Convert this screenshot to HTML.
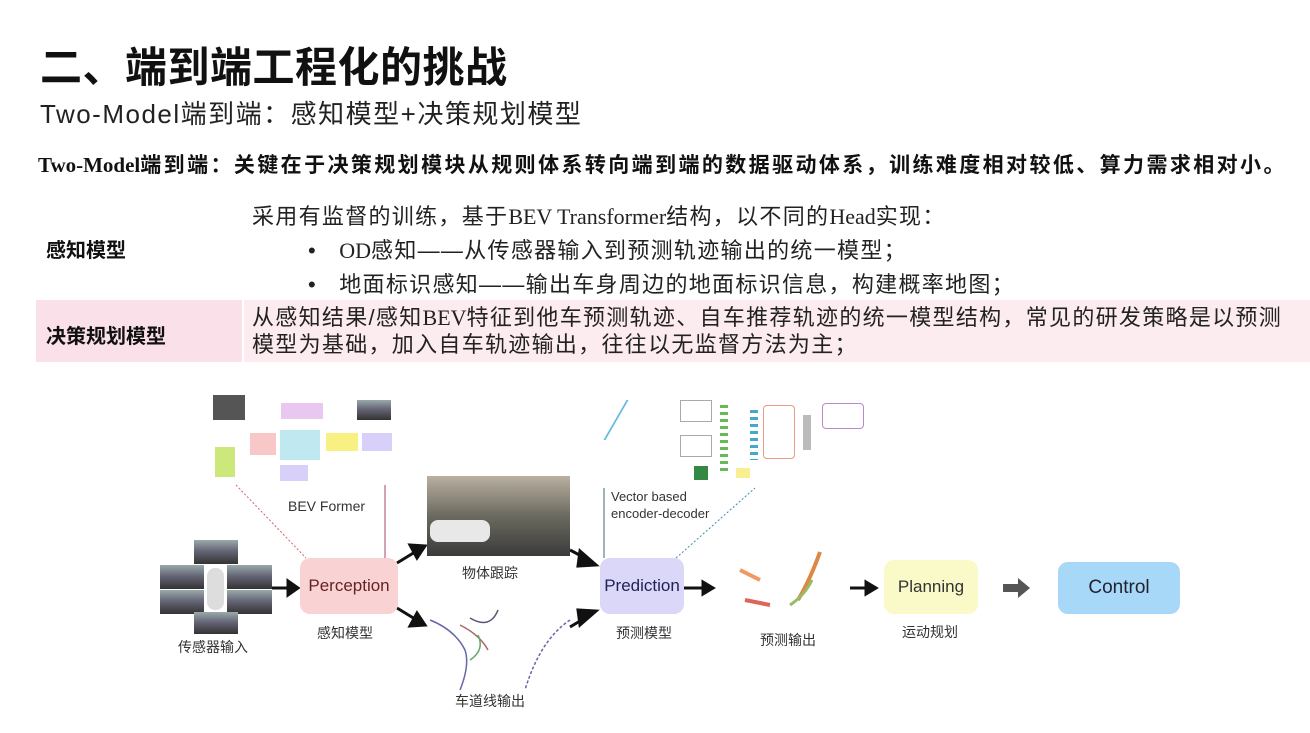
<!DOCTYPE html>
<html><head><meta charset="utf-8"><style>
body{margin:0;width:1310px;height:733px;background:#fff;position:relative;overflow:hidden;font-family:"Liberation Sans","Noto Sans CJK SC",sans-serif;color:#111}
.a{position:absolute;white-space:nowrap}
.box{position:absolute;border-radius:10px;display:flex;align-items:center;justify-content:center;font-size:17px;color:#222}
.lab{position:absolute;font-size:14px;color:#333;white-space:nowrap}
.img{position:absolute;background:linear-gradient(#9aa 0%,#667 45%,#333 100%)}
.s{font-family:'Liberation Serif',serif;letter-spacing:0}
.b{letter-spacing:1.3px}
</style></head><body>
<div class="a" style="left:40px;top:34px;font-size:42px;font-weight:bold;letter-spacing:0.5px">二、端到端工程化的挑战</div>
<div class="a" style="left:40px;top:94px;font-size:26px;color:#222;letter-spacing:1.5px">Two-Model端到端：感知模型+决策规划模型</div>
<div class="a" style="left:38px;top:149px;font-size:21px;font-weight:bold;letter-spacing:2.4px"><span style="font-family:'Liberation Serif','Noto Serif CJK SC',serif;letter-spacing:0">Two-Model</span>端到端：关键在于决策规划模块从规则体系转向端到端的数据驱动体系，训练难度相对较低、算力需求相对小。</div>
<div class="a b" style="left:252px;top:199px;font-size:22px;color:#222">采用有监督的训练，基于<span class="s">BEV Transformer</span>结构，以不同的<span class="s">Head</span>实现：</div>
<div class="a" style="left:46px;top:234px;font-size:20px;font-weight:bold">感知模型</div>
<div class="a b" style="left:308px;top:233px;font-size:22px;color:#222">•&nbsp;&nbsp;&nbsp;<span class="s">OD</span>感知——从传感器输入到预测轨迹输出的统一模型；</div>
<div class="a b" style="left:308px;top:267px;font-size:22px;color:#222">•&nbsp;&nbsp;&nbsp;地面标识感知——输出车身周边的地面标识信息，构建概率地图；</div>
<div style="position:absolute;left:36px;top:300px;width:206px;height:62px;background:#fae0e8"></div>
<div style="position:absolute;left:244px;top:300px;width:1066px;height:62px;background:#fcebef"></div>
<div class="a" style="left:46px;top:320px;font-size:20px;font-weight:bold">决策规划模型</div>
<div class="a b" style="left:252px;top:304px;font-size:22px;line-height:27px;color:#222">从感知结果/感知<span class="s">BEV</span>特征到他车预测轨迹、自车推荐轨迹的统一模型结构，常见的研发策略是以预测<br>模型为基础，加入自车轨迹输出，往往以无监督方法为主；</div>

<!-- BEV former figure -->
<div class="img" style="left:213px;top:395px;width:32px;height:25px;background:#555"></div>
<div style="position:absolute;left:215px;top:447px;width:20px;height:30px;background:#cde87a"></div>
<div style="position:absolute;left:250px;top:433px;width:26px;height:22px;background:#f8c8c8"></div>
<div style="position:absolute;left:280px;top:430px;width:40px;height:30px;background:#bfe8f0"></div>
<div style="position:absolute;left:281px;top:403px;width:42px;height:16px;background:#e8c8f0"></div>
<div style="position:absolute;left:326px;top:433px;width:32px;height:18px;background:#f8f080"></div>
<div style="position:absolute;left:362px;top:433px;width:30px;height:18px;background:#d8d0f8"></div>
<div style="position:absolute;left:280px;top:465px;width:28px;height:16px;background:#d8d0f8"></div>
<div class="img" style="left:357px;top:400px;width:34px;height:20px"></div>
<div class="lab" style="left:288px;top:498px;font-size:14px">BEV Former</div>
<svg style="position:absolute;left:0;top:0" width="1310" height="733">
<line x1="236" y1="485" x2="306" y2="558" stroke="#c66" stroke-dasharray="2,2"/>
<line x1="385" y1="485" x2="385" y2="558" stroke="#a46"/>
<line x1="604" y1="488" x2="604" y2="558" stroke="#467"/>
<line x1="676" y1="558" x2="755" y2="488" stroke="#48a" stroke-dasharray="2,2"/>
<g stroke="#111" stroke-width="3" fill="#111">
<line x1="272" y1="588" x2="290" y2="588"/><polygon points="288,581 298,588 288,595"/>
<line x1="397" y1="563" x2="415" y2="552"/><polygon points="410,545 425,546 417,558"/>
<line x1="397" y1="608" x2="415" y2="619"/><polygon points="410,626 425,625 417,613"/>
<line x1="570" y1="550" x2="585" y2="558"/><polygon points="580,551 596,565 578,566"/>
<line x1="570" y1="627" x2="585" y2="618"/><polygon points="580,625 596,611 578,610"/>
<line x1="684" y1="588" x2="705" y2="588"/><polygon points="703,582 713,588 703,594"/>
<line x1="850" y1="588" x2="868" y2="588"/><polygon points="866,582 876,588 866,594"/>
</g>
<rect x="1003" y="584" width="17" height="8" fill="#555"/><polygon points="1018,578 1030,588 1018,598" fill="#555"/>
<g fill="none" stroke-width="1.5">
<path d="M430 620 Q455 630 465 650 Q470 665 460 690" stroke="#66a"/>
<path d="M460 625 Q480 635 488 650" stroke="#a66"/>
<path d="M470 618 Q490 630 498 610" stroke="#557"/>
<path d="M478 635 Q485 650 470 660" stroke="#6a6"/>
<path d="M570 620 Q540 640 525 690" stroke="#66a" stroke-dasharray="3,2"/>
<path d="M820 552 Q810 580 798 600" stroke="#d84" stroke-width="4"/>
<path d="M812 580 Q805 595 790 605" stroke="#9b6" stroke-width="3"/>
<path d="M740 570 L760 580" stroke="#e96" stroke-width="4"/>
<path d="M745 600 L770 605" stroke="#d65" stroke-width="4"/>
</g>
</svg>
<!-- vector encoder figure -->
<div style="position:absolute;left:615px;top:400px;width:40px;height:40px;border-left:2px solid #6bd;transform:skewX(-30deg)"></div>
<div style="position:absolute;left:680px;top:400px;width:30px;height:20px;border:1px solid #aaa"></div>
<div style="position:absolute;left:680px;top:435px;width:30px;height:20px;border:1px solid #aaa"></div>
<div style="position:absolute;left:720px;top:405px;width:8px;height:70px;background:repeating-linear-gradient(#6b5 0 3px,#fff 3px 7px)"></div>
<div style="position:absolute;left:750px;top:410px;width:8px;height:50px;background:repeating-linear-gradient(#4ac 0 3px,#fff 3px 7px)"></div>
<div style="position:absolute;left:763px;top:405px;width:30px;height:52px;border:1px solid #e98;border-radius:4px"></div>
<div style="position:absolute;left:803px;top:415px;width:8px;height:35px;background:#bbb"></div>
<div style="position:absolute;left:822px;top:403px;width:40px;height:24px;border:1px solid #b8c;border-radius:4px"></div>
<div style="position:absolute;left:694px;top:466px;width:14px;height:14px;background:#384"></div>
<div style="position:absolute;left:736px;top:468px;width:14px;height:10px;background:#f8f090"></div>
<div class="lab" style="left:611px;top:488px;font-size:13px;line-height:17px">Vector based<br>encoder-decoder</div>

<!-- sensors -->
<div class="img" style="left:194px;top:540px;width:44px;height:24px"></div>
<div class="img" style="left:160px;top:565px;width:44px;height:24px"></div>
<div class="img" style="left:227px;top:565px;width:45px;height:24px"></div>
<div class="img" style="left:160px;top:590px;width:44px;height:24px"></div>
<div class="img" style="left:227px;top:590px;width:45px;height:24px"></div>
<div class="img" style="left:194px;top:612px;width:44px;height:22px"></div>
<div style="position:absolute;left:207px;top:568px;width:17px;height:42px;background:#ddd;border-radius:8px"></div>
<div class="lab" style="left:178px;top:637px">传感器输入</div>

<div class="img" style="left:427px;top:476px;width:143px;height:80px;background:linear-gradient(#b9b0a0,#6b6a60 50%,#3a3a3a)"></div>
<div style="position:absolute;left:430px;top:520px;width:60px;height:22px;background:#e8e8e8;border-radius:8px"></div>
<div class="lab" style="left:462px;top:563px">物体跟踪</div>

<div class="box" style="left:300px;top:558px;width:98px;height:56px;background:#f9d3d3;color:#622">Perception</div>
<div class="lab" style="left:317px;top:623px">感知模型</div>
<div class="box" style="left:600px;top:558px;width:84px;height:56px;background:#dad7f8;color:#225">Prediction</div>
<div class="lab" style="left:616px;top:623px">预测模型</div>
<div class="lab" style="left:760px;top:630px">预测输出</div>
<div class="box" style="left:884px;top:560px;width:94px;height:54px;background:#fafac9;color:#333">Planning</div>
<div class="lab" style="left:902px;top:622px">运动规划</div>
<div class="box" style="left:1058px;top:562px;width:122px;height:52px;background:#a8d8f8;font-size:19px;color:#223">Control</div>
<div class="lab" style="left:455px;top:691px">车道线输出</div>
</body></html>
